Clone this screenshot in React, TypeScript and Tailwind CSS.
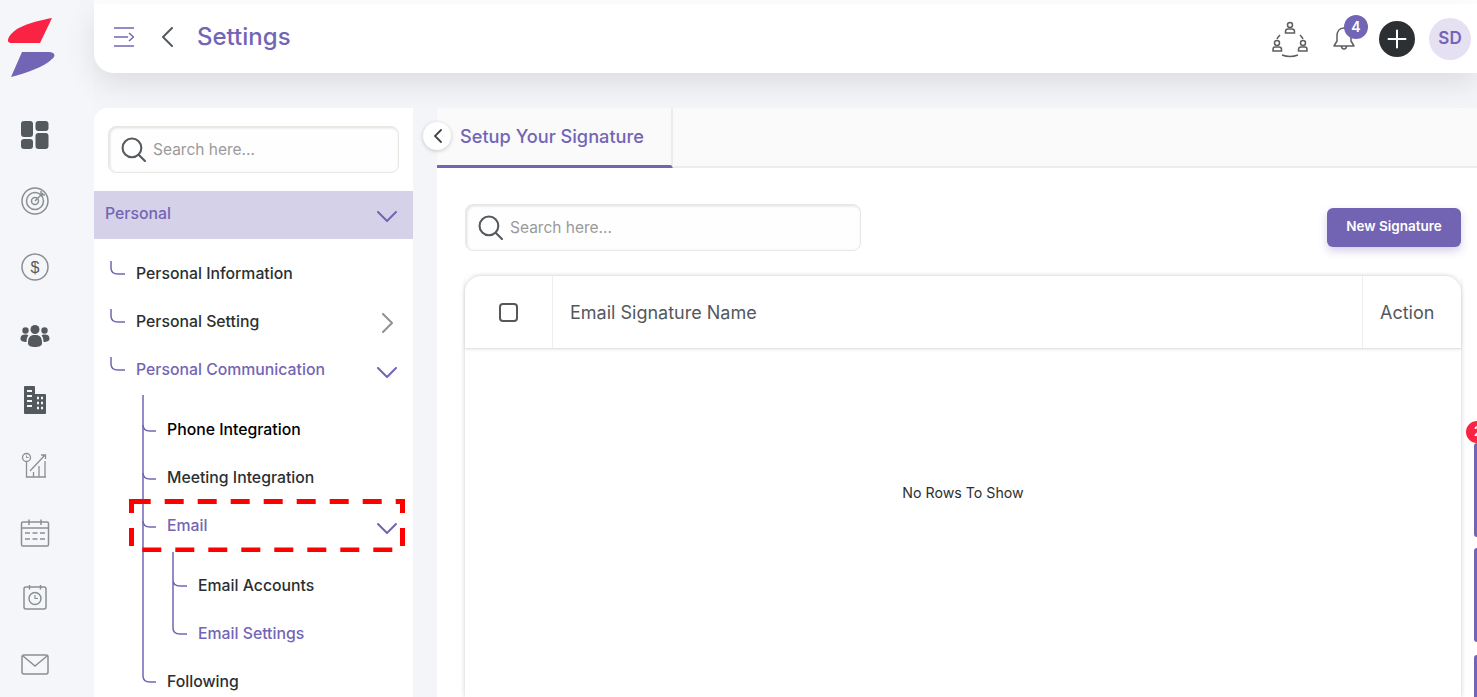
import React from "react";

const P = "#7365b5";

function Chevron({ dir = "down", color = P, className = "" }: { dir?: "down" | "right" | "left"; color?: string; className?: string }) {
  const d = dir === "down" ? "M1 1 L10 10 L19 1" : dir === "right" ? "M1 1 L10 10 L1 19" : "M11 1 L2 10 L11 19";
  const size = dir === "down" ? { w: 20, h: 11 } : { w: 12, h: 20 };
  return (
    <svg width={size.w} height={size.h} viewBox={`0 0 ${size.w} ${size.h}`} fill="none" className={className}>
      <path d={d} stroke={color} strokeWidth="2" strokeLinecap="round" strokeLinejoin="round" />
    </svg>
  );
}

function SearchIcon({ size = 25 }: { size?: number }) {
  return (
    <svg width={size} height={size} viewBox="0 0 24 24" fill="none" className="shrink-0">
      <circle cx="10.500" cy="10.500" r="9" stroke="#555a5e" strokeWidth="2" />
      <path d="M17 17 L23 23" stroke="#555a5e" strokeWidth="2" strokeLinecap="round" />
    </svg>
  );
}

function Logo() {
  return (
    <svg width="50" height="62" viewBox="0 0 50 62" fill="none">
      <path d="M44 0 C28 3 7 8 1 19 C-1 23 0 25 3 25 L32 25 Z" fill="#fb2343" />
      <path d="M14 34 L42 34 C47 35 48 38 44 41 C36 49 18 55 3 59 Z" fill={P} />
    </svg>
  );
}

const G = "#54595d";
const L = "#8b8f92";

function RailIcon({ kind }: { kind: string }) {
  const box = { width: 30, height: 30, viewBox: "0 0 30 30", fill: "none" as const };
  switch (kind) {
    case "grid":
      return (
        <svg {...box}>
          <rect x="1" y="1" width="12" height="16" rx="3" fill={G} />
          <rect x="15.500" y="1" width="13" height="10" rx="3" fill={G} />
          <rect x="1" y="19" width="12" height="10" rx="3" fill={G} />
          <rect x="15.500" y="13" width="13" height="16" rx="3" fill={G} />
        </svg>
      );
    case "target":
      return (
        <svg {...box}>
          <circle cx="15" cy="15" r="13" stroke={L} strokeWidth="1.500" />
          <circle cx="15" cy="15" r="8.500" stroke={L} strokeWidth="1.500" />
          <circle cx="15" cy="15" r="3.500" stroke={L} strokeWidth="1.500" />
          <path d="M15 15 L23 7 M21 5 L21 9 L25 9" stroke={L} strokeWidth="1.500" />
        </svg>
      );
    case "dollar":
      return (
        <svg {...box}>
          <circle cx="15" cy="15" r="13" stroke={L} strokeWidth="1.500" />
          <text x="15" y="21" textAnchor="middle" fontSize="16" fill={G} fontFamily="Liberation Sans, sans-serif">$</text>
        </svg>
      );
    case "team":
      return (
        <svg {...box}>
          <circle cx="15" cy="8.500" r="4.500" fill={G} />
          <circle cx="5.500" cy="9.500" r="3.200" fill={G} />
          <circle cx="24.500" cy="9.500" r="3.200" fill={G} />
          <path d="M8 22 C8 15 11 14 15 14 C19 14 22 15 22 22 C22 25 19 26 15 26 C11 26 8 25 8 22 Z" fill={G} />
          <path d="M0.500 18 C0.500 14 3 13.500 6 13.500 C7 13.500 8 14 8.500 14.500 C7 16 6.500 18 6.500 21 C3 21 0.500 20 0.500 18 Z" fill={G} />
          <path d="M29.500 18 C29.500 14 27 13.500 24 13.500 C23 13.500 22 14 21.500 14.500 C23 16 23.500 18 23.500 21 C27 21 29.500 20 29.500 18 Z" fill={G} />
        </svg>
      );
    case "building":
      return (
        <svg {...box}>
          <path d="M4 2 Q4 1 5 1 L14 1 Q15 1 15 2 L15 9 L25 9 Q26 9 26 10 L26 28 Q26 29 25 29 L5 29 Q4 29 4 28 Z" fill={G} />
          <path d="M7 6 H12 M7 11 H12 M7 16 H12 M7 21 H12" stroke="#f5f6f9" strokeWidth="2" />
          <path d="M17 13 H19 M21 13 H23 M17 18 H19 M21 18 H23 M17 23 H19 M21 23 H23" stroke="#f5f6f9" strokeWidth="2.500" />
        </svg>
      );
    case "chart":
      return (
        <svg {...box}>
          <circle cx="6.500" cy="6.500" r="4" stroke={L} strokeWidth="1.300" />
          <path d="M6.500 4.500 V6.500 H8.500" stroke={L} strokeWidth="1" />
          <path d="M6.500 11 V26 H26 M10 20 L25 4 M21 4 H25.500 V8 M13.500 26 V21 M19 26 V15 M25 26 V10" stroke={L} strokeWidth="1.300" />
        </svg>
      );
    case "calendar":
      return (
        <svg {...box}>
          <rect x="1.500" y="4" width="27" height="24" rx="1.500" stroke={L} strokeWidth="1.500" />
          <path d="M1.500 10 H28.500 M9 1.500 V7 M21 1.500 V7" stroke={L} strokeWidth="1.500" />
          <path d="M5 15 H10 M12.500 15 H17.500 M20 15 H25 M5 21 H10 M12.500 21 H17.500 M20 21 H25" stroke={L} strokeWidth="1.500" />
        </svg>
      );
    case "clock":
      return (
        <svg {...box}>
          <rect x="4" y="4" width="22" height="22" rx="2" stroke={L} strokeWidth="1.500" />
          <path d="M9.500 2 V6.500 M20.500 2 V6.500" stroke={L} strokeWidth="1.500" />
          <circle cx="15" cy="15.500" r="6" stroke={L} strokeWidth="1.500" />
          <path d="M15 12 V15.500 H18" stroke={L} strokeWidth="1.200" />
        </svg>
      );
    default:
      return (
        <svg {...box}>
          <rect x="2" y="6" width="26" height="19" rx="2" stroke={L} strokeWidth="1.500" />
          <path d="M3 7 L15 17 L27 7" stroke={L} strokeWidth="1.500" />
        </svg>
      );
  }
}

function Rail() {
  const icons: [string, string][] = [
    ["grid", "mt-[40px]"],
    ["target", "mt-[36px]"],
    ["dollar", "mt-[36px]"],
    ["team", "mt-[39px]"],
    ["building", "mt-[34px]"],
    ["chart", "mt-[36px]"],
    ["calendar", "mt-[37px]"],
    ["clock", "mt-[35px]"],
    ["mail", "mt-[36px]"],
  ];
  return (
    <aside className="flex w-[94px] shrink-0 flex-col items-center bg-[#f5f6f9] pr-[24px]">
      <div className="mt-[18px] -ml-[4px] h-[62px]">
        <Logo />
      </div>
      {icons.map(([k, m]) => (
        <div key={k} className={`${m} h-[30px] w-[30px]`}>
          <RailIcon kind={k} />
        </div>
      ))}
    </aside>
  );
}

function Header() {
  return (
    <header className="relative z-10 flex h-[69px] shrink-0 items-center rounded-bl-[20px] bg-white pl-[20px] pr-[6px] shadow-[0_10px_30px_rgba(0,0,0,0.1)]">
      <div className="mb-[4px] flex items-center">
        <svg width="20" height="20" viewBox="0 0 20 20" fill="none" className="shrink-0">
          <path d="M0 1 H20 M0 19 H20 M0 10 H14 M15 6 L19.500 10 L15 14" stroke={P} strokeWidth="1.500" />
        </svg>
        <Chevron dir="left" color="#555a5e" className="ml-[27px]" />
        <h1 className="ml-[24px] text-[24px] font-medium leading-none text-[#7365b5]">Settings</h1>
      </div>
      <div className="ml-auto flex items-center">
        <svg width="36" height="38" viewBox="0 0 36 38" fill="none" className="mt-[2px]">
          <g stroke="#5c5f62" strokeWidth="1.500">
            <circle cx="18" cy="4" r="2.500" />
            <path d="M13.500 12 V10.500 Q13.500 8 16 8 H20 Q22.500 8 22.500 10.500 V12 Z" />
            <circle cx="5" cy="22" r="2.500" />
            <path d="M1 30 V28.500 Q1 26 3 26 H7 Q9.500 26 9.500 28.500 V30 Z" />
            <circle cx="31" cy="22" r="2.500" />
            <path d="M26.500 30 V28.500 Q26.500 26 29 26 H33 Q35 26 35 28.500 V30 Z" />
            <path d="M8 14 Q6 16 5 18 M28 14 Q30 16 31 18 M10 34 Q18 37 26 34" />
          </g>
        </svg>
        <div className="relative ml-[24px] h-[26px] w-[24px]">
          <svg width="24" height="26" viewBox="0 0 24 26" fill="none">
            <path d="M12 2 C7 2 5 6 5 10 V15 L2 20 H22 L19 15 V10 C19 6 17 2 12 2 Z M9.500 20 C9.500 24 14.500 24 14.500 20" stroke="#5c5f62" strokeWidth="1.500" strokeLinejoin="round" />
          </svg>
          <span className="absolute -right-[12px] -top-[11px] flex h-[24px] w-[24px] items-center justify-center rounded-full bg-[#7365b5] text-[14px] font-semibold text-white">4</span>
        </div>
        <button className="ml-[23px] flex h-[36px] w-[36px] items-center justify-center rounded-full bg-[#2d3033]">
          <svg width="20" height="20" viewBox="0 0 20 20" fill="none">
            <path d="M10 1.500 V18.500 M1.500 10 H18.500" stroke="#fff" strokeWidth="2" strokeLinecap="round" />
          </svg>
        </button>
        <div className="ml-[14px] flex h-[42px] w-[42px] items-center justify-center rounded-full bg-[#e5e1f2] text-[17px] font-semibold text-[#7365b5]">SD</div>
      </div>
    </header>
  );
}

function Row({ label, pl, color = "text-[#2c2f31]", h = "h-12", right }: { label: string; pl: string; color?: string; h?: string; right?: React.ReactNode }) {
  return (
    <div className={`flex ${h} items-center justify-between pr-[16px] ${pl}`}>
      <span className={`pt-[2px] text-[15.800px] font-medium leading-none ${color}`}>{label}</span>
      {right}
    </div>
  );
}

function Tree() {
  return (
    <div className="relative flex-1 overflow-hidden">
      <svg width="100" height="460" viewBox="0 0 100 460" fill="none" className="absolute left-0 top-0">
        <g stroke={P} strokeWidth="1.500">
          <path d="M17 12 V19 Q17 25 24 25 H31" />
          <path d="M17 60 V67 Q17 73 24 73 H31" />
          <path d="M17 108 V115 Q17 121 24 121 H31" />
          <path d="M49 146 V427 Q49 433 56 433 H62" />
          <path d="M49 176 Q49 182 56 182 H62 M49 224 Q49 230 56 230 H62 M49 272 Q49 278 56 278 H62" />
          <path d="M79 303 V379 Q79 385 86 385 H93 M79 331 Q79 337 86 337 H93" />
        </g>
      </svg>
      <div>
        <Row label="Personal Information" pl="pl-[42px]" />
        <Row label="Personal Setting" pl="pl-[42px]" right={<Chevron dir="right" color="#8f9295" className="mr-[3px] mt-[4px]" />} />
        <Row label="Personal Communication" pl="pl-[42px]" color="text-[#7365b5]" right={<Chevron className="mt-[7px]" />} />
        <div className="pt-3">
          <Row label="Phone Integration" pl="pl-[73px]" color="text-black" />
          <Row label="Meeting Integration" pl="pl-[73px]" />
          <Row label="Email" pl="pl-[73px]" color="text-[#7365b5]" right={<Chevron className="mt-[7px]" />} />
          <div className="pt-3">
            <Row label="Email Accounts" pl="pl-[104px]" />
            <Row label="Email Settings" pl="pl-[104px]" color="text-[#7365b5]" />
          </div>
          <Row label="Following" pl="pl-[73px]" />
        </div>
      </div>
    </div>
  );
}

function SearchBox({ className = "" }: { className?: string }) {
  return (
    <div className={`flex h-[47px] items-center rounded-[8px] border border-[#e9e7e2] bg-[#fefefe] pl-[12px] shadow-[inset_1px_1px_3px_rgba(0,0,0,0.13)] ${className}`}>
      <SearchIcon />
      <span className="ml-[7px] text-[15.500px] text-[#9a9a9a]">Search here...</span>
    </div>
  );
}

function SettingsNav() {
  return (
    <nav className="flex w-[319px] shrink-0 flex-col rounded-tl-[14px] bg-white">
      <div className="px-[14px] pt-[18px]">
        <SearchBox className="w-[291px]" />
      </div>
      <div className="mt-[18px] flex h-12 shrink-0 items-center justify-between bg-[#d5d1e8] pl-[11px] pr-[16px]">
        <span className="pb-[2px] text-[15.800px] font-medium text-[#7365b5]">Personal</span>
        <Chevron className="mt-[3px]" />
      </div>
      <div className="mt-[10px] flex flex-1 flex-col overflow-hidden">
        <Tree />
      </div>
    </nav>
  );
}

function Content() {
  return (
    <section className="relative ml-[24px] flex min-w-0 flex-1 flex-col bg-white">
      <div className="flex h-[60px] shrink-0 border-b-2 border-[#ececec] bg-[#fafafa]">
        <div className="-mb-[2px] flex w-[236px] items-center rounded-tl-[14px] border-b-[3px] border-r-2 border-b-[#7365b5] border-r-[#ececec] pl-[23px]">
          <span className="text-[18.200px] font-medium text-[#7365b5]">Setup Your Signature</span>
        </div>
      </div>
      <button className="absolute -left-[14px] top-[14px] flex h-[28px] w-[28px] items-center justify-center rounded-full bg-white shadow-[0_1px_4px_rgba(0,0,0,0.2)]">
        <svg width="9" height="14" viewBox="0 0 9 14" fill="none">
          <path d="M8 1 L2 7 L8 13" stroke="#444" strokeWidth="1.800" strokeLinecap="round" />
        </svg>
      </button>
      <div className="flex min-h-0 flex-1 flex-col pl-[28px] pr-[16px]">
        <div className="flex items-center justify-between pt-[36px]">
          <SearchBox className="w-[396px]" />
          <button className="h-[39px] w-[134px] rounded-[6px] bg-[#7264b3] pb-[2px] text-[13.500px] font-semibold text-white shadow-[0_4px_8px_rgba(115,101,181,0.3)]">New Signature</button>
        </div>
        <div className="mt-[25px] flex min-h-0 flex-1 flex-col rounded-t-[16px] shadow-[0_0_5px_rgba(0,0,0,0.2)]">
          <div className="flex h-[73px] shrink-0 border-b border-[#e4e4e4] text-[18px] text-[#54585b] shadow-[0_1px_3px_rgba(0,0,0,0.08)]">
            <div className="flex w-[88px] items-center justify-center border-r border-[#eeeeee]">
              <span className="h-[19px] w-[19px] rounded-[4px] border-[2.500px] border-[#54585b]" />
            </div>
            <div className="flex flex-1 items-center pl-[17px]">Email Signature Name</div>
            <div className="flex w-[99px] items-center border-l border-[#eeeeee] pl-[17px]">Action</div>
          </div>
          <div className="flex-1 pt-[133px] text-center text-[14.200px] text-[#2c2f31]">No Rows To Show</div>
        </div>
      </div>
      <div className="absolute right-0 top-[335px] h-[94px] w-[3px] rounded-l-[4px] bg-[#7365b5]" />
      <div className="absolute right-0 top-[440px] h-[94px] w-[3px] rounded-l-[4px] bg-[#7365b5]" />
      <div className="absolute right-0 top-[547px] h-[60px] w-[3px] rounded-l-[4px] bg-[#7365b5]" />
      <span className="absolute -right-[11px] top-[313px] flex h-[22px] w-[22px] items-center rounded-full bg-[#fb2343] pl-[8px] text-[13px] font-semibold text-white">2</span>
    </section>
  );
}

function Annotation() {
  return (
    <svg width="276" height="53" viewBox="0 0 276 53" fill="none" className="pointer-events-none absolute left-[129px] top-[499px]">
      <g stroke="#ff0000" strokeWidth="5">
        <path d="M2.700 2.500 H276" strokeDasharray="19 14" />
        <path d="M0 2.500 H3 M271 2.500 H276" />
        <path d="M2.500 0 V14 M2.500 29 V47" />
        <path d="M273.500 0 V14 M273.500 29 V47" />
        <path d="M13.300 51 H264" strokeDasharray="19 14" />
      </g>
    </svg>
  );
}

export default function App() {
  return (
    <div className="relative flex h-screen w-full overflow-hidden bg-white font-['Inter','Liberation_Sans',sans-serif]">
      <Rail />
      <div className="mt-[4px] flex min-w-0 flex-1 flex-col bg-[#f4f5f8]">
        <Header />
        <div className="mt-[35px] flex min-h-0 flex-1">
          <SettingsNav />
          <Content />
        </div>
      </div>
      <Annotation />
    </div>
  );
}
